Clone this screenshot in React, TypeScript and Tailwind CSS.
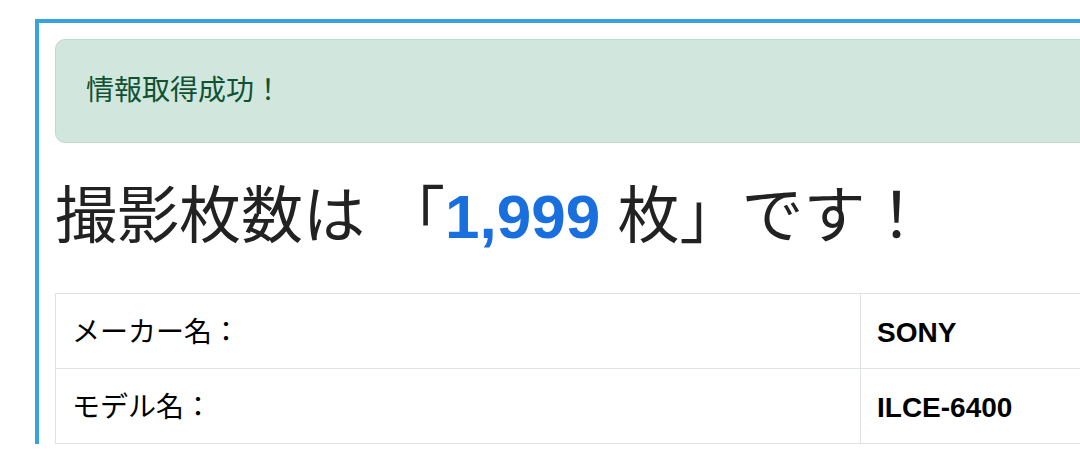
export default function App() {
  const rows = [
    { label: "メーカー名：", value: "SONY" },
    { label: "モデル名：", value: "ILCE-6400" },
  ];

  return (
    <div
      className="w-[1080px] h-[454px] overflow-hidden bg-white text-[#212529]"
      style={{ fontFamily: '"Liberation Sans", "Noto Sans CJK JP", sans-serif' }}
    >
      <div className="ml-[35px] mt-[19px] w-[1400px] border-l-4 border-t-4 border-[#38a2dd] pl-4 pt-4">
        {/* Alert */}
        <div className="rounded-[10px] border border-[#badbcc] bg-[#d1e7dd] px-[30px] py-[30px] text-[28px] leading-[42px] text-[#0f5132]">
          情報取得成功！
        </div>

        {/* Heading */}
        <h1 className="mt-[37px] mb-[39px] text-[62px] leading-[74px] font-normal text-[#222]">
          撮影枚数は<span className="ml-[18px]">「</span>
          <span className="font-bold text-[#1a6fdf]">1,999</span> 枚」です！
        </h1>

        {/* Info table */}
        <div className="border border-[#dee2e6] text-[28px] leading-[42px] text-black">
          {rows.map((r, i) => (
            <div
              key={r.label}
              className={`grid grid-cols-[805px_1fr] ${i > 0 ? "border-t border-[#dee2e6]" : ""}`}
            >
              <div className="border-r border-[#dee2e6] px-4 pt-[18px] pb-[14px]">{r.label}</div>
              <div className="px-4 pt-[18px] pb-[14px] font-bold">{r.value}</div>
            </div>
          ))}
        </div>
      </div>
    </div>
  );
}
